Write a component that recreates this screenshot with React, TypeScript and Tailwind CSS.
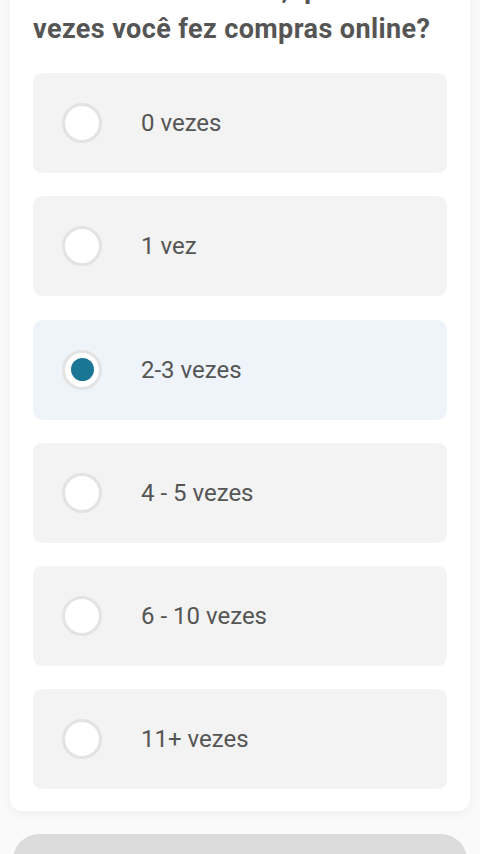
import React from 'react';

const options = ['0 vezes', '1 vez', '2-3 vezes', '4 - 5 vezes', '6 - 10 vezes', '11+ vezes'];

const Radio: React.FC<{ checked: boolean }> = ({ checked }) => (
  <div className="w-[40px] h-[40px] rounded-full border-[3px] border-[#e3e3e3] bg-white flex items-center justify-center shrink-0">
    {checked && <div className="w-[23px] h-[23px] rounded-full bg-[#1b7594]" />}
  </div>
);

export default function App() {
  const selected = 2;
  return (
    <div className="min-h-[854px] bg-[#fafafa] overflow-hidden" style={{ fontFamily: 'Roboto, "Noto Sans", sans-serif' }}>
      {/* Question card (scrolled) */}
      <div className="mx-[10px] -mt-[55px] bg-white rounded-[12px] shadow-[0_2px_10px_rgba(0,0,0,0.06)] px-[23px] pt-[24px] pb-[22px]">
        <h2 className="text-[27px] leading-[40px] tracking-[0.4px] font-bold text-[#555555] mb-[24px]">
          Nos últimos 30 dias, quantas vezes você fez compras online?
        </h2>
        <div className="flex flex-col gap-[23.3px]">
          {options.map((opt, i) => (
            <div
              key={opt}
              className={`h-[100px] rounded-[9px] flex items-center pl-[29px] ${i === selected ? 'bg-[#eff4fb]' : 'bg-[#f3f3f3]'}`}
            >
              <Radio checked={i === selected} />
              <span className="ml-[39px] text-[24px] text-[#555555]">{opt}</span>
            </div>
          ))}
        </div>
      </div>

      {/* Continue button (cut off) */}
      <div className="mx-[13px] mt-[23px] h-[60px] rounded-[26px] bg-[#dcdcdc]" />
    </div>
  );
}
